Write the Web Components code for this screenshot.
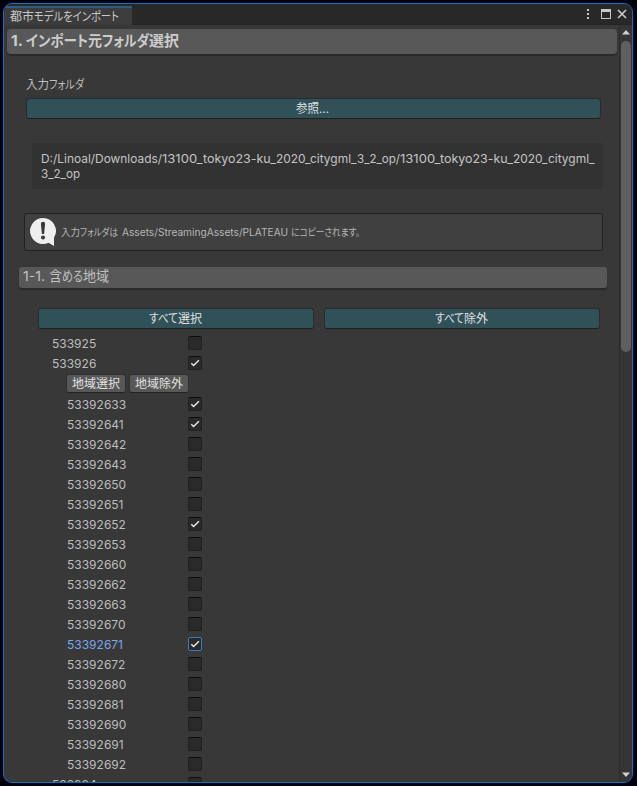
<!DOCTYPE html>
<html lang="ja"><head><meta charset="utf-8"><title>都市モデルをインポート</title>
<style>
html,body{margin:0;height:100%;overflow:hidden;background:#02020e}
body{box-sizing:border-box;padding:3px;font-family:Inter,"Noto Sans CJK JP",sans-serif;font-size:12px;color:#bdbdbd}
</style></head><body>
<import-window></import-window>
<script>
const define=(name,html,setup)=>customElements.define(name,class extends HTMLElement{
  connectedCallback(){
    if(this.shadowRoot)return;
    const t=document.createElement('template');t.innerHTML=html;
    this.attachShadow({mode:'open'}).append(t.content.cloneNode(true));
    if(setup)setup(this,this.shadowRoot);
  }
});

// A run of text condensed or expanded to a given advance width.
define('text-run',`<style>
:host{display:inline-block;white-space:pre;vertical-align:baseline}
span{display:inline-block;transform-origin:0 50%;white-space:pre;font-feature-settings:"palt"}
</style><span></span>`,(el,root)=>{
  const s=root.querySelector('span');s.textContent=el.getAttribute('text');
  const w=+el.getAttribute('w');
  el.style.width=w+'px';
  s.style.transform='scaleX('+w/s.getBoundingClientRect().width+')';
});

define('section-header',`<style>
:host{display:flex;align-items:center;box-sizing:border-box;height:25px;background:#585858;border-radius:4px;padding:0 0 2px 4px;box-shadow:0 2px 1px #2a2a2a;font-size:15px;font-weight:700;color:#cccccc;white-space:pre;line-height:20px}
:host([sub]){height:21px;font-size:13.5px;font-weight:400;color:#c0c0c0;border-radius:3px;padding-bottom:3px}
</style><div><slot></slot></div>`);

define('teal-button',`<style>
:host{display:flex;align-items:center;justify-content:center;box-sizing:border-box;height:21px;background:#305158;border:1px solid #272d2f;border-bottom-color:#202020;border-radius:3px;color:#e0e0e0;line-height:18px;white-space:pre;padding-right:2px}
</style><div><slot></slot></div>`);

define('small-button',`<style>
:host{display:flex;align-items:center;justify-content:center;box-sizing:border-box;width:60px;height:19px;background:#585858;border:1px solid #303030;border-bottom-color:#222;border-radius:3px;color:#e0e0e0;line-height:16px;white-space:pre}
</style><div><slot></slot></div>`);

define('check-box',`<style>
:host{display:block;box-sizing:border-box;width:14px;height:14px;background:#2a2a2a;border:1px solid #212121;border-top-color:#0d0d0d;border-radius:2px}
:host([focus]){border-color:#3a79bb}
svg{display:none;width:12px;height:12px}
:host([checked]) svg{display:block}
</style><svg viewBox="0 0 12 12"><path d="M2.3 6.200 4.600 8.400 9.900 3.200" fill="none" stroke="#e8e8e8" stroke-width="1.450"/></svg>`);

define('mesh-row',`<style>
:host{display:flex;height:20px;line-height:20px;box-sizing:border-box}
.l{width:136px;padding-top:1px;box-sizing:border-box;font-size:12px}
:host([child]) .l{padding-left:15px}
:host([focus]) .l{color:#7ba6ec}
check-box{margin-top:3px}
</style><div class="l"></div><check-box></check-box>`,(el,root)=>{
  root.querySelector('.l').textContent=el.getAttribute('code');
  for(const a of ['checked','focus'])if(el.hasAttribute(a))root.querySelector('check-box').setAttribute(a,'');
});

define('info-box',`<style>
:host{display:flex;align-items:center;box-sizing:border-box;height:38px;border:1px solid #222;border-radius:3px;background:#404040;padding-left:4px;font-size:10px;color:#b6b6b6;white-space:pre}
svg{width:28px;height:30px;margin-right:4px;flex:none}
div{padding-bottom:1px}
</style><svg viewBox="0 0 28 30"><path d="M14 1a13 13 0 1 0 5.500 24.800L25 29V20.800A13 13 0 0 0 14 1Z" fill="#eee"/><path d="M11.900 6.800q0-2 2.100-2t2.100 2L15.100 17h-2.200Z" fill="#383838"/><circle cx="14" cy="20.400" r="2" fill="#383838"/></svg><div><slot></slot></div>`);

define('scroll-bar',`<style>
:host{display:flex;flex-direction:column;align-items:center;box-sizing:border-box;width:13px;background:#353535;border-left:1px solid #2d2d2d;padding:5px 1px 5px 1px}
svg{width:8px;height:5px;flex:none}
.t{width:10px;height:311px;background:#5f5f5f;border-radius:5px;margin:6px 0 auto}
</style><svg viewBox="0 0 8 5"><path d="M4 0 8 4.500H0Z" fill="#d0d0d0"/></svg><div class="t"></div><svg viewBox="0 0 8 5"><path d="M0 .5H8L4 5Z" fill="#d0d0d0"/></svg>`);

define('title-bar',`<style>
:host{display:flex;height:21px;box-sizing:border-box;background:#282828;padding-top:2px;border-bottom:1px solid #242424}
.tab{box-sizing:border-box;width:128px;height:19px;border-top:2px solid #2c5d87;background:#3c3c3c;padding-left:6px;line-height:18px;white-space:pre;color:#c8c8c8}
svg{margin-left:auto;width:48px;height:18px}
</style><div class="tab"><slot></slot></div>
<svg viewBox="0 0 48 18"><g fill="#c8c8c8"><path d="M3 3h2v2H3zM3 7h2v2H3zM3 11h2v2H3z"/><path d="M17 3h10v10H17zM18 6v6h8V6z" fill-rule="evenodd"/></g><path d="M34 4l8 8M42 4l-8 8" stroke="#c8c8c8" stroke-width="1.700"/></svg>`);

define('import-window',`<style>
:host{display:flex;flex-direction:column;box-sizing:border-box;width:630px;height:780px;border:1px solid #0e72c4;border-radius:9px;background:#383838;overflow:hidden}
.main{display:flex;flex:1;min-height:0}
.c{flex:1;min-width:0;overflow:hidden;padding-top:4px}
.c>section-header{margin:0 2px 0 3px}
.label{margin:22px 0 0 21.500px;height:18px;line-height:18px;white-space:pre}
.browse{margin:4px 18px 0 22px}
.path{box-sizing:border-box;height:46px;margin:24px 16px 0 28px;background:#323232;padding:8px 9px;line-height:15px;font-size:12px;color:#c4c4c4;white-space:pre}
info-box{margin:24px 16px 0 20px}
.c>section-header[sub]{margin:16px 12px 0 15px}
.pair{display:flex;gap:10px;margin:20px 19px 0 34px}
.pair teal-button{flex:1}
.rows{margin:4px 0 0 48px}
.btns{display:flex;gap:3px;margin-left:14px;height:21px;padding-top:1px;box-sizing:border-box}
</style>
<title-bar><text-run text="都市" w="24"></text-run><text-run text="モデルをインポート" w="85"></text-run></title-bar>
<div class="main"><div class="c">
<section-header><text-run text="1." w="12"></text-run><text-run text=" " w="3"></text-run><text-run text="インポート" w="62"></text-run><text-run text="元" w="14"></text-run><text-run text="フォルダ" w="47"></text-run><text-run text="選択" w="30"></text-run></section-header>
<div class="label"><text-run text="入力" w="23"></text-run><text-run text="フォルダ" w="35"></text-run></div>
<teal-button class="browse"><text-run text="参照..." w="33"></text-run></teal-button>
<div class="path"><text-run text="D:/Linoal/Downloads/" w="121"></text-run><text-run text="13100_" w="40.5"></text-run><text-run text="tokyo23-ku_" w="73"></text-run><text-run text="2020_" w="34.5"></text-run><text-run text="citygml_" w="46.5"></text-run><text-run text="3_2_op/" w="43"></text-run><text-run text="13100_" w="40.5"></text-run><text-run text="tokyo23-ku_" w="73"></text-run><text-run text="2020_" w="34.5"></text-run><text-run text="citygml_" w="46.5"></text-run><br><text-run text="3_2_op" w="39"></text-run></div>
<info-box><text-run text="入力" w="19"></text-run><text-run text="フォルダは" w="38"></text-run><text-run text=" " w="4"></text-run><text-run text="Assets/StreamingAssets/PLATEAU" w="166"></text-run><text-run text=" " w="3"></text-run><text-run text="にコピーされます。" w="69"></text-run></info-box>
<section-header sub><text-run text="1-1." w="22"></text-run><text-run text=" " w="4"></text-run><text-run text="含" w="13"></text-run><text-run text="める" w="21"></text-run><text-run text="地域" w="26"></text-run></section-header>
<div class="pair"><teal-button><text-run text="すべて" w="29"></text-run><text-run text="選択" w="24"></text-run></teal-button><teal-button><text-run text="すべて" w="29"></text-run><text-run text="除外" w="24"></text-run></teal-button></div>
<div class="rows"><mesh-row code="533925"></mesh-row><mesh-row code="533926" checked></mesh-row>
<div class="btns"><small-button><text-run text="地域選択" w="48"></text-run></small-button><small-button><text-run text="地域除外" w="48"></text-run></small-button></div>
<div class="list"></div><mesh-row code="533934"></mesh-row></div>
</div><scroll-bar></scroll-bar></div>`,(el,root)=>{
  const on=new Set(['33','41','52','71']);
  for(const n of '33 41 42 43 50 51 52 53 60 62 63 70 71 72 80 81 90 91 92'.split(' ')){
    const r=document.createElement('mesh-row');
    r.setAttribute('code','533926'+n);r.setAttribute('child','');
    if(on.has(n))r.setAttribute('checked','');
    if(n==='71')r.setAttribute('focus','');
    root.querySelector('.list').append(r);
  }
});
</script></body></html>
